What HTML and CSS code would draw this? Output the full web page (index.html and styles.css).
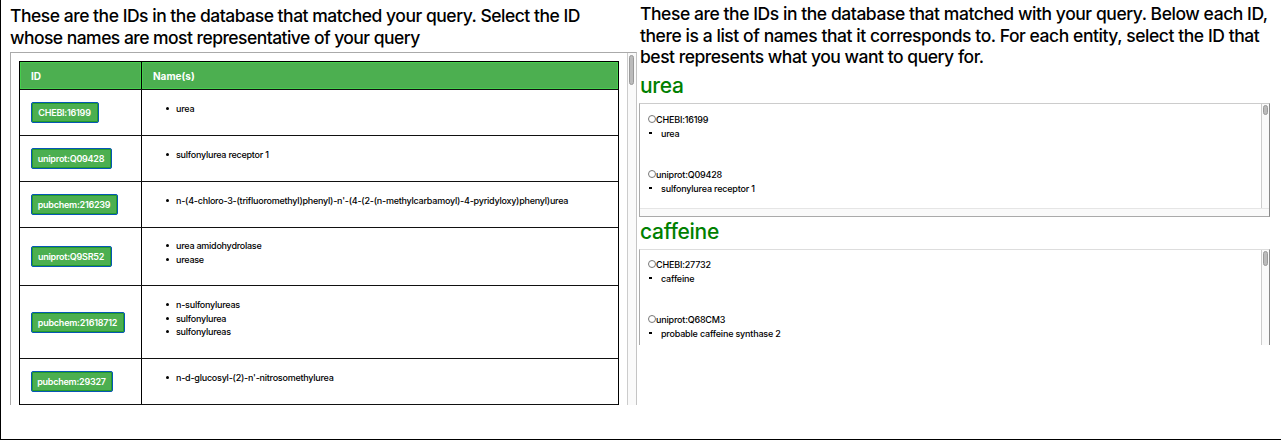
FILE: index.html
```
<!DOCTYPE html>
<html lang="en">
<head>
<meta charset="utf-8">
<title>Query matches</title>
<link rel="stylesheet" href="styles.css">
</head>
<body>
<main class="page">
  <section class="matches">
    <h1 class="intro intro-left"><span class="l1">These are the IDs in the database that matched your query. Select the ID</span><br><span class="l2">whose names are most representative of your query</span></h1>
    <div class="panel">
      <div class="panel-body">
        <div class="table">
          <div class="row head"><div class="cell">ID</div><div class="cell">Name(s)</div></div>
          <div class="row"><div class="cell"><button class="id w68">CHEBI:16199</button></div><ul class="cell names"><li>urea</li></ul></div>
          <div class="row"><div class="cell"><button class="id w81">uniprot:Q09428</button></div><ul class="cell names"><li>sulfonylurea receptor 1</li></ul></div>
          <div class="row"><div class="cell"><button class="id w87">pubchem:216239</button></div><ul class="cell names"><li>n-(4-chloro-3-(trifluoromethyl)phenyl)-n'-(4-(2-(n-methylcarbamoyl)-4-pyridyloxy)phenyl)urea</li></ul></div>
          <div class="row two"><div class="cell"><button class="id w81">uniprot:Q9SR52</button></div><ul class="cell names"><li>urea amidohydrolase</li><li>urease</li></ul></div>
          <div class="row three"><div class="cell"><button class="id w94">pubchem:21618712</button></div><ul class="cell names"><li>n-sulfonylureas</li><li>sulfonylurea</li><li>sulfonylureas</li></ul></div>
          <div class="row"><div class="cell"><button class="id w82">pubchem:29327</button></div><ul class="cell names"><li>n-d-glucosyl-(2)-n'-nitrosomethylurea</li></ul></div>
        </div>
      </div>
      <div class="track"><div class="thumb tall"></div></div>
    </div>
  </section>
  <section class="entities">
    <h1 class="intro"><span class="r1">These are the IDs in the database that matched with your query. Below each ID,</span><br><span class="r2">there is a list of names that it corresponds to. For each entity, select the ID that</span><br><span class="r3">best represents what you want to query for.</span></h1>
    <h2 class="entity">urea</h2>
    <div class="choices first">
      <div class="options">
        <label class="option"><span class="radio"></span>CHEBI:16199</label>
        <div class="alias">urea</div>
        <label class="option"><span class="radio"></span>uniprot:Q09428</label>
        <div class="alias">sulfonylurea receptor 1</div>
      </div>
      <div class="track"><div class="thumb"></div></div>
      <div class="track-bottom"></div>
    </div>
    <h2 class="entity second">caffeine</h2>
    <div class="choices cut">
      <div class="options">
        <label class="option"><span class="radio"></span>CHEBI:27732</label>
        <div class="alias">caffeine</div>
        <label class="option"><span class="radio"></span>uniprot:Q68CM3</label>
        <div class="alias">probable caffeine synthase 2</div>
      </div>
      <div class="track"><div class="thumb"></div></div>
    </div>
  </section>
</main>
</body>
</html>
```
FILE: styles.css
```
* { box-sizing: border-box; }
body { margin: 0; background: #fff; color: #000; font-family: Inter, "Liberation Sans", sans-serif; }
.page { display: flex; height: 440px; border-left: 1px solid #000; border-bottom: 1px solid #000; overflow: hidden; }
.matches { width: 638px; padding: 5px 0 0 9px; }
.entities { width: 631px; padding-top: 3px; }
.intro { margin: 0; height: 66px; font-size: 17.5px; line-height: 21.6px; font-weight: 500; white-space: nowrap; }
.intro-left { height: 47px; }
.entities .intro { padding-left: 1px; }
.l1 { letter-spacing: -0.48px; }
.l2 { letter-spacing: -0.54px; }
.r1 { letter-spacing: -0.44px; }
.r2 { letter-spacing: -0.44px; }
.r3 { letter-spacing: -0.48px; }

.panel { display: flex; width: 627px; height: 353px; border: solid #aaa; border-width: 1px 1px 0 1px; border-right-color: #c4c4c4; }
.panel-body { flex: 1; padding: 8px 8px 0; }
.table { width: 600px; border: solid #000; border-width: 1px 1px 0 1px; font-size: 9px; }
.row { display: grid; grid-template-columns: 122px 1fr; height: 46px; border-bottom: 1px solid #111; }
.row.head { height: 28px; background: #4caf50; color: #fff; font-weight: 700; font-size: 10px; }
.row.head .cell { height: 27px; box-shadow: inset 0 0 0 1px #45cf4d; }
.row.two { height: 58px; }
.row.three { height: 73px; }
.cell { margin: 0; padding: 0 11px; display: flex; align-items: center; }
.cell:first-child { border-right: 1px solid #000; }
.names { display: block; padding: 12px 0 0 34px; line-height: 13.5px; list-style: none; letter-spacing: -0.24px; font-weight: 500; }
.names li { display: flex; align-items: center; white-space: nowrap; }
.names li::before { content: ""; width: 3px; height: 3px; border-radius: 50%; background: #000; margin: 0 7px 0 -10px; }
.two .names { padding-top: 11px; }
.id { height: 21px; padding: 0 1px 0 0; border: 1px solid #0757b5; border-radius: 2px; background: #4caf50; box-shadow: inset 0 0 0 1px #249b2a; color: #fff; font: 600 9px Inter, "Liberation Sans", sans-serif; white-space: nowrap; letter-spacing: -0.24px; }
.w68 { width: 68px; }
.w81 { width: 81px; }
.w82 { width: 82px; }
.w87 { width: 87px; }
.w94 { width: 94px; }

.track { width: 9px; padding: 2px 1px; background: #fafafa; border-left: 1px solid #ccc; }
.thumb { width: 5px; height: 10px; margin-left: 1px; border: 1px solid #999; border-radius: 3px; background: #bbb; }
.panel .thumb { margin-left: 0; }
.thumb.tall { height: 30px; }

.entity { margin: 1px 0 0 1px; height: 33px; font-size: 21px; line-height: 32px; font-weight: 500; color: #008000; letter-spacing: -0.3px; }
.entity.second { margin-top: -1px; height: 33px; }
.choices { display: grid; grid-template-columns: 1fr 8px; grid-template-rows: 1fr auto; border: 1px solid #aaa; border-top-color: #ccc; border-right-color: #888; font-size: 9px; font-weight: 500; letter-spacing: -0.19px; }
.choices.first { height: 114px; }
.choices.cut { height: 96px; border-bottom: 0; border-top-color: #ddd; }
.choices.cut .thumb { height: 15px; }
.choices .track { width: 8px; padding: 1px 0; }
.track-bottom { grid-column: 1 / -1; height: 8px; border-top: 1px solid #e5e5e5; background: #fafafa; }
.options { padding: 8px 0 0 8px; }
.cut .options { padding-top: 7px; }
.option { display: flex; align-items: center; height: 14px; }
.radio { width: 8px; height: 8px; border: 1px solid #777; border-radius: 50%; }
.alias { display: flex; align-items: center; height: 14px; margin-bottom: 27px; }
.alias:last-child { margin-bottom: 0; }
.alias::before { content: ""; width: 3px; height: 2px; margin: 0 9px 0 1px; background: #000; }
```
